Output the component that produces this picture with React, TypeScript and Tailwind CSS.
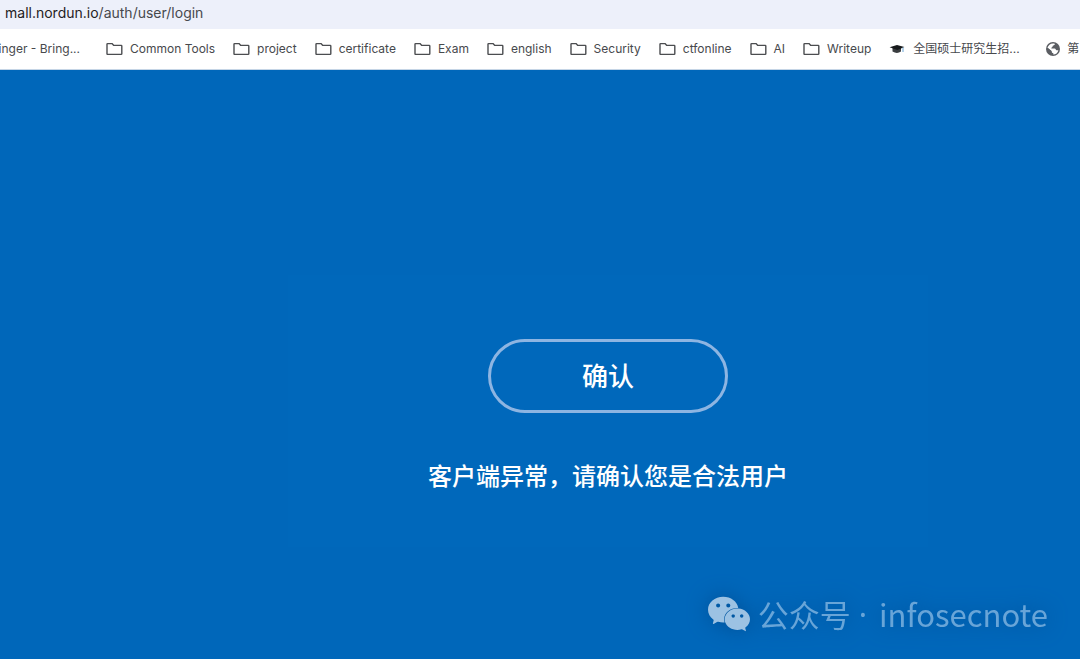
import { SiWechat } from 'react-icons/si';

type Bookmark = { label: string; icon: 'folder' | 'cap' | 'globe' };

const bookmarks: Bookmark[] = [
  { label: 'Common Tools', icon: 'folder' },
  { label: 'project', icon: 'folder' },
  { label: 'certificate', icon: 'folder' },
  { label: 'Exam', icon: 'folder' },
  { label: 'english', icon: 'folder' },
  { label: 'Security', icon: 'folder' },
  { label: 'ctfonline', icon: 'folder' },
  { label: 'AI', icon: 'folder' },
  { label: 'Writeup', icon: 'folder' },
  { label: '全国硕士研究生招...', icon: 'cap' },
  { label: '第', icon: 'globe' },
];

function FolderIcon() {
  return (
    <svg viewBox="0 0 17 14" className="w-[17px] h-3.5 shrink-0" fill="none" stroke="#4b4d50" strokeWidth="1.4" strokeLinejoin="round">
      <path d="M1 2.2Q1 1.6 1.6 1.6H6L7.8 3.4H15.2Q15.8 3.4 15.8 4V11.8Q15.8 12.4 15.2 12.4H1.6Q1 12.4 1 11.8Z" />
    </svg>
  );
}

function CapIcon() {
  return (
    <svg viewBox="0 0 16 14" className="w-4 h-3.5 mr-px shrink-0">
      <path d="M3.5 6V9.6Q8 12.4 12 9.6V6Z" fill="#3a3d40" />
      <path d="M0.6 5.2L8 3L15.4 5L8.4 8Z" fill="#17191b" />
      <path d="M14 5.5V10" stroke="#6ba6d6" strokeWidth="1" />
    </svg>
  );
}

function GlobeIcon() {
  return (
    <svg viewBox="0 0 14 14" className="w-3.5 h-3.5 shrink-0">
      <circle cx="7" cy="7" r="7" fill="#5b5e63" />
      <path d="M8.2 1.5C9.5 2 8.8 3.2 7.4 3.4C6.2 3.6 7 5 5.8 5.4C5 5.7 5.2 6.6 6 6.6H8.6C9.8 6.6 9.6 8.2 10.6 8.3L12.4 8.2C11.8 10.8 9.8 12.5 7.2 12.6V11.2C5.8 11 5.4 10.2 5.5 9L1.5 5.8C2.2 3 5 .9 8.2 1.5Z" fill="#fff" />
      <path d="M1.5 5.8L5.5 9V10.4L7.2 11.2V12.6C3.4 12.7.8 9.4 1.5 5.8Z" fill="#5b5e63" />
    </svg>
  );
}

const icons = { folder: FolderIcon, cap: CapIcon, globe: GlobeIcon };

export default function App() {
  return (
    <div className="min-h-screen flex flex-col overflow-hidden bg-[#0067ba] font-['Inter','Noto_Sans_CJK_SC',sans-serif]">
      <header className="shrink-0">
        <div className="h-[29px] flex items-center bg-[#edf0fa] px-[5px] pb-1 text-sm text-[#47494d]">
          <p className="whitespace-nowrap">
            <span className="text-[#1f2023]">mall.nordun.io</span>/auth/user/login
          </p>
        </div>

        <nav className="h-[41px] flex items-center gap-[18px] overflow-hidden border-b border-[#c5d5e6] bg-white text-xs text-[#47494d]">
          {/* Cut off by the left edge of the window */}
          <a href="#" className="flex w-[88px] shrink-0 justify-end pr-2 whitespace-nowrap">inger - Bring...</a>
          {bookmarks.map(({ label, icon }) => {
            const Icon = icons[icon];
            return (
              <a key={label} href="#" className={`flex shrink-0 items-center gap-[7px] whitespace-nowrap ${icon === 'cap' ? 'w-[139px]' : ''}`}>
                <Icon />
                {label}
              </a>
            );
          })}
        </nav>
      </header>

      <main className="relative flex-1 flex justify-center pt-[205px] pl-34">
        <section className="w-160 h-68 flex flex-col items-center bg-[#0068bb] pt-16 text-white">
          <button className="w-60 h-[74px] rounded-full border-3 border-[#8db5e2] text-[26px] font-medium">确认</button>
          <p className="mt-12 text-2xl font-medium">客户端异常，请确认您是合法用户</p>
        </section>

        {/* Watermark */}
        <div className="absolute right-8 bottom-6 flex items-center gap-2 text-[#68a5d8] drop-shadow-[0_0_10px_#004f96] font-['Noto_Sans_CJK_SC',sans-serif]">
          <SiWechat className="w-[42px] h-[42px] text-[#9cc2e3]" />
          <p className="flex items-center gap-2 whitespace-nowrap text-[31px] leading-10">
            <span>公众号</span>
            <span className="mr-1 font-['Noto_Sans',sans-serif]">·</span>
            <span>infosecnote</span>
          </p>
        </div>
      </main>
    </div>
  );
}
